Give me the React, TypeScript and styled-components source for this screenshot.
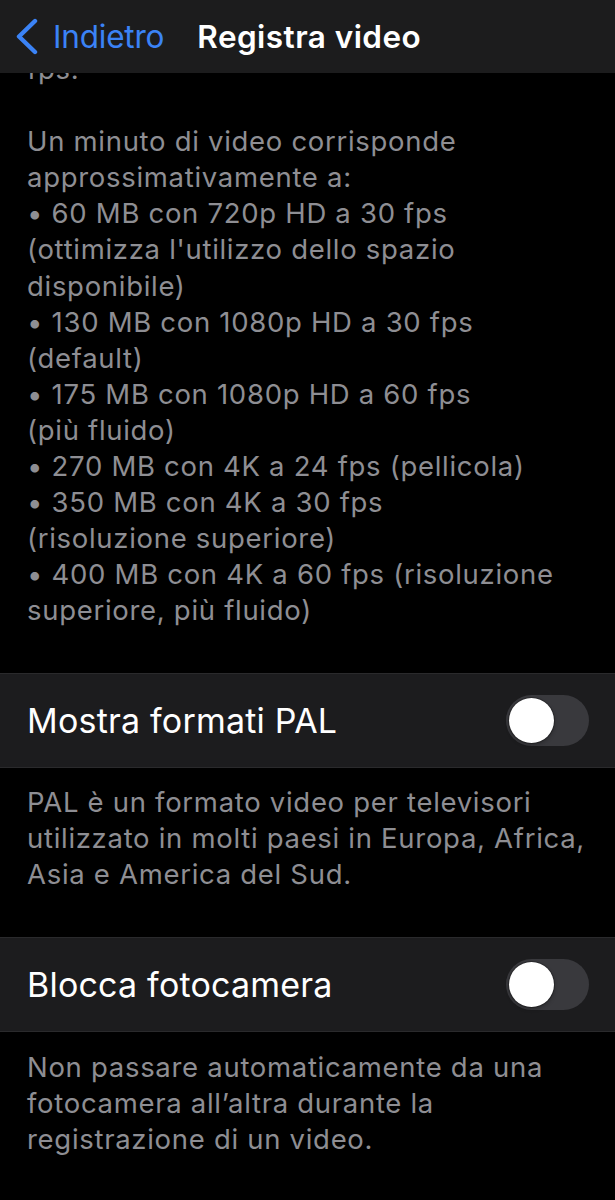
import React from "react"
import styled, { createGlobalStyle } from "styled-components"

const GlobalStyle = createGlobalStyle`
  body {
    margin: 0;
    background: #000;
    font-family: "Inter", "Noto Sans", "Liberation Sans", sans-serif;
    -webkit-font-smoothing: antialiased;
  }
`

const Screen = styled.div`
  width: 615px;
  height: 1200px;
  background: #000;
  display: flex;
  flex-direction: column;
  overflow: hidden;
`

const NavBar = styled.header`
  flex: 0 0 73px;
  background: #1c1c1d;
  display: flex;
  align-items: center;
  padding-left: 15px;
  box-sizing: border-box;
`

const BackButton = styled.div`
  display: flex;
  align-items: center;
  gap: 15px;
  color: #3b83f6;
  font-size: 31.5px;
  letter-spacing: -0.2px;
`

const Title = styled.h1`
  margin: 0 0 0 33px;
  color: #fff;
  font-size: 31.5px;
  font-weight: 600;
  letter-spacing: 0.45px;
`

// scrolled content: the list is scrolled 22px, so the first line sits under the bar
const ScrollArea = styled.main`
  flex: 1;
  overflow: hidden;
`

const ScrollContent = styled.div`
  margin-top: -22px;
`

const Footer = styled.p<{ $gap?: number }>`
  margin: ${(p) => p.$gap ?? 0}px 0 0;
  padding: 0 27px;
  color: #8e8e93;
  font-size: 27.5px;
  line-height: 36.1px;
  letter-spacing: 0.7px;
  white-space: pre-line;
`

const Row = styled.div<{ $gap: number }>`
  margin-top: ${(p) => p.$gap}px;
  height: 95px;
  box-sizing: border-box;
  background: #1c1c1e;
  border-top: 1px solid #2a2a2c;
  border-bottom: 1px solid #2a2a2c;
  display: flex;
  align-items: center;
  justify-content: space-between;
  padding: 0 26px 0 27px;
`

const RowLabel = styled.span`
  color: #fff;
  font-size: 34px;
  letter-spacing: 0.2px;
`

const Track = styled.div`
  width: 83px;
  height: 51px;
  border-radius: 26px;
  background: #39393d;
  padding: 3px;
  box-sizing: border-box;
  display: flex;
  align-items: center;
`

const Knob = styled.div`
  width: 45px;
  height: 45px;
  border-radius: 50%;
  background: #fff;
  box-shadow: 0 0 0 1px rgba(0, 0, 0, 0.25), 0 2px 4px rgba(0, 0, 0, 0.3);
`

const Chevron = () => (
  <svg width="23" height="37" viewBox="0 0 23 37" fill="none">
    <path d="M20 3 L4 18.5 L20 34" stroke="#3b83f6" strokeWidth="4.4" strokeLinecap="round" strokeLinejoin="round" />
  </svg>
)

const Toggle = () => (
  <Track>
    <Knob />
  </Track>
)

const sizesText = `fps.

Un minuto di video corrisponde
approssimativamente a:
• 60 MB con 720p HD a 30 fps
(ottimizza l'utilizzo dello spazio
disponibile)
• 130 MB con 1080p HD a 30 fps
(default)
• 175 MB con 1080p HD a 60 fps
(più fluido)
• 270 MB con 4K a 24 fps (pellicola)
• 350 MB con 4K a 30 fps
(risoluzione superiore)
• 400 MB con 4K a 60 fps (risoluzione
superiore, più fluido)`

const palText = `PAL è un formato video per televisori
utilizzato in molti paesi in Europa, Africa,
Asia e America del Sud.`

const lockText = `Non passare automaticamente da una
fotocamera all’altra durante la
registrazione di un video.`

export default function App() {
  return (
    <>
      <GlobalStyle />
      <Screen>
        <NavBar>
          <BackButton>
            <Chevron />
            Indietro
          </BackButton>
          <Title>Registra video</Title>
        </NavBar>
        <ScrollArea>
          <ScrollContent>
            <Footer>{sizesText}</Footer>
            <Row $gap={44}>
              <RowLabel>Mostra formati PAL</RowLabel>
              <Toggle />
            </Row>
            <Footer $gap={16}>{palText}</Footer>
            <Row $gap={45}>
              <RowLabel>Blocca fotocamera</RowLabel>
              <Toggle />
            </Row>
            <Footer $gap={17}>{lockText}</Footer>
          </ScrollContent>
        </ScrollArea>
      </Screen>
    </>
  )
}
